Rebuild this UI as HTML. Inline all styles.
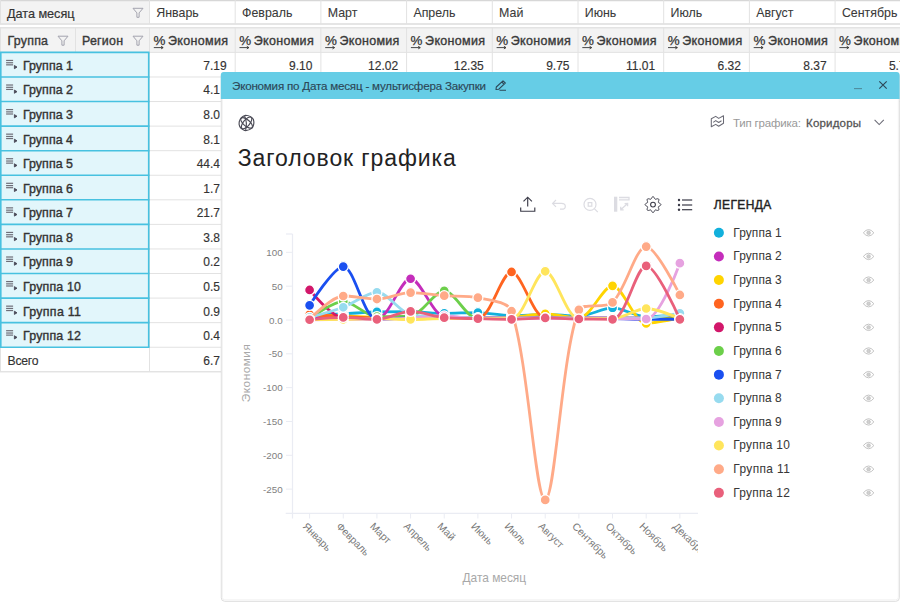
<!DOCTYPE html>
<html><head><meta charset="utf-8"><style>
html,body{margin:0;padding:0;width:900px;height:602px;overflow:hidden;background:#fff;font-family:"Liberation Sans", sans-serif;}
</style></head><body>
<svg width="900" height="602" viewBox="0 0 900 602" style="position:absolute;left:0;top:0" font-family='"Liberation Sans", sans-serif'><rect width="900" height="602" fill="#fff"/><defs><clipPath id="tc"><path d="M0 0 H900 V72 H220 V602 H0 Z"/></clipPath></defs><g id="table"><rect x="0" y="0" width="149.5" height="24" fill="#f3f3f3"/><line x1="0" y1="0.6" x2="900" y2="0.6" stroke="#d7d7d7" stroke-width="1.2"/><line x1="0" y1="24" x2="900" y2="24" stroke="#e5e5e5" stroke-width="1.8"/><rect x="0" y="27" width="900" height="25" fill="#f3f3f3"/><line x1="0" y1="27.8" x2="900" y2="27.8" stroke="#e3e3e3" stroke-width="1.6"/><line x1="0.5" y1="0" x2="0.5" y2="24" stroke="#e2e2e2"/><line x1="0.5" y1="27" x2="0.5" y2="372" stroke="#e2e2e2"/><line x1="149.50" y1="0" x2="149.50" y2="24" stroke="#e2e2e2"/><line x1="149.50" y1="27" x2="149.50" y2="372" stroke="#e2e2e2"/><line x1="235.20" y1="0" x2="235.20" y2="24" stroke="#e2e2e2"/><line x1="235.20" y1="27" x2="235.20" y2="372" stroke="#e2e2e2"/><line x1="320.90" y1="0" x2="320.90" y2="24" stroke="#e2e2e2"/><line x1="320.90" y1="27" x2="320.90" y2="372" stroke="#e2e2e2"/><line x1="406.60" y1="0" x2="406.60" y2="24" stroke="#e2e2e2"/><line x1="406.60" y1="27" x2="406.60" y2="372" stroke="#e2e2e2"/><line x1="492.30" y1="0" x2="492.30" y2="24" stroke="#e2e2e2"/><line x1="492.30" y1="27" x2="492.30" y2="372" stroke="#e2e2e2"/><line x1="578.00" y1="0" x2="578.00" y2="24" stroke="#e2e2e2"/><line x1="578.00" y1="27" x2="578.00" y2="372" stroke="#e2e2e2"/><line x1="663.70" y1="0" x2="663.70" y2="24" stroke="#e2e2e2"/><line x1="663.70" y1="27" x2="663.70" y2="372" stroke="#e2e2e2"/><line x1="749.40" y1="0" x2="749.40" y2="24" stroke="#e2e2e2"/><line x1="749.40" y1="27" x2="749.40" y2="372" stroke="#e2e2e2"/><line x1="835.10" y1="0" x2="835.10" y2="24" stroke="#e2e2e2"/><line x1="835.10" y1="27" x2="835.10" y2="372" stroke="#e2e2e2"/><line x1="920.80" y1="0" x2="920.80" y2="24" stroke="#e2e2e2"/><line x1="920.80" y1="27" x2="920.80" y2="372" stroke="#e2e2e2"/><line x1="1006.50" y1="0" x2="1006.50" y2="24" stroke="#e2e2e2"/><line x1="1006.50" y1="27" x2="1006.50" y2="372" stroke="#e2e2e2"/><line x1="75.5" y1="27" x2="75.5" y2="52" stroke="#e2e2e2"/><line x1="0" y1="52.40" x2="900" y2="52.40" stroke="#e2e2e2"/><line x1="0" y1="76.97" x2="900" y2="76.97" stroke="#e2e2e2"/><line x1="0" y1="101.54" x2="900" y2="101.54" stroke="#e2e2e2"/><line x1="0" y1="126.11" x2="900" y2="126.11" stroke="#e2e2e2"/><line x1="0" y1="150.68" x2="900" y2="150.68" stroke="#e2e2e2"/><line x1="0" y1="175.25" x2="900" y2="175.25" stroke="#e2e2e2"/><line x1="0" y1="199.82" x2="900" y2="199.82" stroke="#e2e2e2"/><line x1="0" y1="224.39" x2="900" y2="224.39" stroke="#e2e2e2"/><line x1="0" y1="248.96" x2="900" y2="248.96" stroke="#e2e2e2"/><line x1="0" y1="273.53" x2="900" y2="273.53" stroke="#e2e2e2"/><line x1="0" y1="298.10" x2="900" y2="298.10" stroke="#e2e2e2"/><line x1="0" y1="322.67" x2="900" y2="322.67" stroke="#e2e2e2"/><line x1="0" y1="347.24" x2="900" y2="347.24" stroke="#e2e2e2"/><line x1="0" y1="371.81" x2="900" y2="371.81" stroke="#e2e2e2"/><rect x="0" y="52.4" width="149" height="294.84" fill="#e2f6fb"/><line x1="0" y1="52.40" x2="149.5" y2="52.40" stroke="#47c1e0" stroke-width="1.6"/><line x1="0" y1="76.97" x2="149.5" y2="76.97" stroke="#47c1e0" stroke-width="1.6"/><line x1="0" y1="101.54" x2="149.5" y2="101.54" stroke="#47c1e0" stroke-width="1.6"/><line x1="0" y1="126.11" x2="149.5" y2="126.11" stroke="#47c1e0" stroke-width="1.6"/><line x1="0" y1="150.68" x2="149.5" y2="150.68" stroke="#47c1e0" stroke-width="1.6"/><line x1="0" y1="175.25" x2="149.5" y2="175.25" stroke="#47c1e0" stroke-width="1.6"/><line x1="0" y1="199.82" x2="149.5" y2="199.82" stroke="#47c1e0" stroke-width="1.6"/><line x1="0" y1="224.39" x2="149.5" y2="224.39" stroke="#47c1e0" stroke-width="1.6"/><line x1="0" y1="248.96" x2="149.5" y2="248.96" stroke="#47c1e0" stroke-width="1.6"/><line x1="0" y1="273.53" x2="149.5" y2="273.53" stroke="#47c1e0" stroke-width="1.6"/><line x1="0" y1="298.10" x2="149.5" y2="298.10" stroke="#47c1e0" stroke-width="1.6"/><line x1="0" y1="322.67" x2="149.5" y2="322.67" stroke="#47c1e0" stroke-width="1.6"/><line x1="0" y1="347.24" x2="149.5" y2="347.24" stroke="#47c1e0" stroke-width="1.6"/><line x1="0.8" y1="52.4" x2="0.8" y2="347.24" stroke="#47c1e0" stroke-width="1.6"/><line x1="148.7" y1="52.4" x2="148.7" y2="347.24" stroke="#47c1e0" stroke-width="1.6"/><path d="M133 8.3 L143 8.3 L139.1 12.9 L139.1 17.3 L136.9 17.3 L136.9 12.9 Z" fill="none" stroke="#a3a3ae" stroke-width="1" stroke-linejoin="round"/><path d="M58 36.2 L68 36.2 L64.1 40.800000000000004 L64.1 45.2 L61.9 45.2 L61.9 40.800000000000004 Z" fill="none" stroke="#a3a3ae" stroke-width="1" stroke-linejoin="round"/><path d="M133 36.2 L143 36.2 L139.1 40.800000000000004 L139.1 45.2 L136.9 45.2 L136.9 40.800000000000004 Z" fill="none" stroke="#a3a3ae" stroke-width="1" stroke-linejoin="round"/><path d="M153.80 47.6 H163.00 M161.10 46.3 L163.20 47.6 L161.10 48.9" fill="none" stroke="#333" stroke-width="0.9"/><path d="M239.50 47.6 H248.70 M246.80 46.3 L248.90 47.6 L246.80 48.9" fill="none" stroke="#333" stroke-width="0.9"/><path d="M325.20 47.6 H334.40 M332.50 46.3 L334.60 47.6 L332.50 48.9" fill="none" stroke="#333" stroke-width="0.9"/><path d="M410.90 47.6 H420.10 M418.20 46.3 L420.30 47.6 L418.20 48.9" fill="none" stroke="#333" stroke-width="0.9"/><path d="M496.60 47.6 H505.80 M503.90 46.3 L506.00 47.6 L503.90 48.9" fill="none" stroke="#333" stroke-width="0.9"/><path d="M582.30 47.6 H591.50 M589.60 46.3 L591.70 47.6 L589.60 48.9" fill="none" stroke="#333" stroke-width="0.9"/><path d="M668.00 47.6 H677.20 M675.30 46.3 L677.40 47.6 L675.30 48.9" fill="none" stroke="#333" stroke-width="0.9"/><path d="M753.70 47.6 H762.90 M761.00 46.3 L763.10 47.6 L761.00 48.9" fill="none" stroke="#333" stroke-width="0.9"/><path d="M839.40 47.6 H848.60 M846.70 46.3 L848.80 47.6 L846.70 48.9" fill="none" stroke="#333" stroke-width="0.9"/><path d="M925.10 47.6 H934.30 M932.40 46.3 L934.50 47.6 L932.40 48.9" fill="none" stroke="#333" stroke-width="0.9"/><g fill="#6e6e78"><rect x="6.1" y="59.85" width="7" height="1.2"/><rect x="6.1" y="62.15" width="7" height="1.2"/><rect x="6.1" y="64.25" width="7" height="1.2"/><path d="M14.4 65.50 L17 67.10 L14.4 68.70 Z" fill="#4a4a58" stroke="#4a4a58" stroke-width="0.9" stroke-linejoin="round"/></g><g fill="#6e6e78"><rect x="6.1" y="84.42" width="7" height="1.2"/><rect x="6.1" y="86.72" width="7" height="1.2"/><rect x="6.1" y="88.82" width="7" height="1.2"/><path d="M14.4 90.07 L17 91.67 L14.4 93.27 Z" fill="#4a4a58" stroke="#4a4a58" stroke-width="0.9" stroke-linejoin="round"/></g><g fill="#6e6e78"><rect x="6.1" y="108.99" width="7" height="1.2"/><rect x="6.1" y="111.29" width="7" height="1.2"/><rect x="6.1" y="113.39" width="7" height="1.2"/><path d="M14.4 114.64 L17 116.24 L14.4 117.84 Z" fill="#4a4a58" stroke="#4a4a58" stroke-width="0.9" stroke-linejoin="round"/></g><g fill="#6e6e78"><rect x="6.1" y="133.56" width="7" height="1.2"/><rect x="6.1" y="135.86" width="7" height="1.2"/><rect x="6.1" y="137.96" width="7" height="1.2"/><path d="M14.4 139.21 L17 140.81 L14.4 142.41 Z" fill="#4a4a58" stroke="#4a4a58" stroke-width="0.9" stroke-linejoin="round"/></g><g fill="#6e6e78"><rect x="6.1" y="158.13" width="7" height="1.2"/><rect x="6.1" y="160.43" width="7" height="1.2"/><rect x="6.1" y="162.53" width="7" height="1.2"/><path d="M14.4 163.78 L17 165.38 L14.4 166.98 Z" fill="#4a4a58" stroke="#4a4a58" stroke-width="0.9" stroke-linejoin="round"/></g><g fill="#6e6e78"><rect x="6.1" y="182.70" width="7" height="1.2"/><rect x="6.1" y="185.00" width="7" height="1.2"/><rect x="6.1" y="187.10" width="7" height="1.2"/><path d="M14.4 188.35 L17 189.95 L14.4 191.55 Z" fill="#4a4a58" stroke="#4a4a58" stroke-width="0.9" stroke-linejoin="round"/></g><g fill="#6e6e78"><rect x="6.1" y="207.27" width="7" height="1.2"/><rect x="6.1" y="209.57" width="7" height="1.2"/><rect x="6.1" y="211.67" width="7" height="1.2"/><path d="M14.4 212.92 L17 214.52 L14.4 216.12 Z" fill="#4a4a58" stroke="#4a4a58" stroke-width="0.9" stroke-linejoin="round"/></g><g fill="#6e6e78"><rect x="6.1" y="231.84" width="7" height="1.2"/><rect x="6.1" y="234.14" width="7" height="1.2"/><rect x="6.1" y="236.24" width="7" height="1.2"/><path d="M14.4 237.49 L17 239.09 L14.4 240.69 Z" fill="#4a4a58" stroke="#4a4a58" stroke-width="0.9" stroke-linejoin="round"/></g><g fill="#6e6e78"><rect x="6.1" y="256.41" width="7" height="1.2"/><rect x="6.1" y="258.71" width="7" height="1.2"/><rect x="6.1" y="260.81" width="7" height="1.2"/><path d="M14.4 262.06 L17 263.66 L14.4 265.26 Z" fill="#4a4a58" stroke="#4a4a58" stroke-width="0.9" stroke-linejoin="round"/></g><g fill="#6e6e78"><rect x="6.1" y="280.98" width="7" height="1.2"/><rect x="6.1" y="283.28" width="7" height="1.2"/><rect x="6.1" y="285.38" width="7" height="1.2"/><path d="M14.4 286.63 L17 288.23 L14.4 289.83 Z" fill="#4a4a58" stroke="#4a4a58" stroke-width="0.9" stroke-linejoin="round"/></g><g fill="#6e6e78"><rect x="6.1" y="305.55" width="7" height="1.2"/><rect x="6.1" y="307.85" width="7" height="1.2"/><rect x="6.1" y="309.95" width="7" height="1.2"/><path d="M14.4 311.20 L17 312.80 L14.4 314.40 Z" fill="#4a4a58" stroke="#4a4a58" stroke-width="0.9" stroke-linejoin="round"/></g><g fill="#6e6e78"><rect x="6.1" y="330.12" width="7" height="1.2"/><rect x="6.1" y="332.42" width="7" height="1.2"/><rect x="6.1" y="334.52" width="7" height="1.2"/><path d="M14.4 335.77 L17 337.37 L14.4 338.97 Z" fill="#4a4a58" stroke="#4a4a58" stroke-width="0.9" stroke-linejoin="round"/></g><line x1="0" y1="371.7" x2="900" y2="371.7" stroke="#e2e2e2"/><g clip-path="url(#tc)"><text x="7" y="17.5" font-size="12.7" font-weight="400" fill="#333333" text-anchor="start" stroke="#333333" stroke-width="0.18" textLength="67.5" lengthAdjust="spacing" >Дата месяц</text><text x="156.3" y="17.4" font-size="12.4" font-weight="400" fill="#3a3a3a" text-anchor="start" stroke="#3a3a3a" stroke-width="0.08" >Январь</text><text x="242.0" y="17.4" font-size="12.4" font-weight="400" fill="#3a3a3a" text-anchor="start" stroke="#3a3a3a" stroke-width="0.08" >Февраль</text><text x="327.7" y="17.4" font-size="12.4" font-weight="400" fill="#3a3a3a" text-anchor="start" stroke="#3a3a3a" stroke-width="0.08" >Март</text><text x="413.40000000000003" y="17.4" font-size="12.4" font-weight="400" fill="#3a3a3a" text-anchor="start" stroke="#3a3a3a" stroke-width="0.08" >Апрель</text><text x="499.1" y="17.4" font-size="12.4" font-weight="400" fill="#3a3a3a" text-anchor="start" stroke="#3a3a3a" stroke-width="0.08" >Май</text><text x="584.8" y="17.4" font-size="12.4" font-weight="400" fill="#3a3a3a" text-anchor="start" stroke="#3a3a3a" stroke-width="0.08" >Июнь</text><text x="670.5" y="17.4" font-size="12.4" font-weight="400" fill="#3a3a3a" text-anchor="start" stroke="#3a3a3a" stroke-width="0.08" >Июль</text><text x="756.1999999999999" y="17.4" font-size="12.4" font-weight="400" fill="#3a3a3a" text-anchor="start" stroke="#3a3a3a" stroke-width="0.08" >Август</text><text x="841.9" y="17.4" font-size="12.4" font-weight="400" fill="#3a3a3a" text-anchor="start" stroke="#3a3a3a" stroke-width="0.08" >Сентябрь</text><text x="927.6" y="17.4" font-size="12.4" font-weight="400" fill="#3a3a3a" text-anchor="start" stroke="#3a3a3a" stroke-width="0.08" >Октябрь</text><text x="7.5" y="44.8" font-size="12.4" font-weight="400" fill="#3a3a3a" text-anchor="start" stroke="#3a3a3a" stroke-width="0.38" textLength="40.5" lengthAdjust="spacing" >Группа</text><text x="82" y="44.8" font-size="12.4" font-weight="400" fill="#3a3a3a" text-anchor="start" stroke="#3a3a3a" stroke-width="0.38" textLength="41" lengthAdjust="spacing" >Регион</text><text x="153.5" y="45.0" font-size="13.4" font-weight="400" fill="#333333" text-anchor="start" stroke="#333333" stroke-width="0.25" >%</text><text x="168.0" y="44.8" font-size="12.5" font-weight="400" fill="#3a3a3a" text-anchor="start" stroke="#3a3a3a" stroke-width="0.38" textLength="60" lengthAdjust="spacing" >Экономия</text><text x="239.2" y="45.0" font-size="13.4" font-weight="400" fill="#333333" text-anchor="start" stroke="#333333" stroke-width="0.25" >%</text><text x="253.7" y="44.8" font-size="12.5" font-weight="400" fill="#3a3a3a" text-anchor="start" stroke="#3a3a3a" stroke-width="0.38" textLength="60" lengthAdjust="spacing" >Экономия</text><text x="324.9" y="45.0" font-size="13.4" font-weight="400" fill="#333333" text-anchor="start" stroke="#333333" stroke-width="0.25" >%</text><text x="339.4" y="44.8" font-size="12.5" font-weight="400" fill="#3a3a3a" text-anchor="start" stroke="#3a3a3a" stroke-width="0.38" textLength="60" lengthAdjust="spacing" >Экономия</text><text x="410.6" y="45.0" font-size="13.4" font-weight="400" fill="#333333" text-anchor="start" stroke="#333333" stroke-width="0.25" >%</text><text x="425.1" y="44.8" font-size="12.5" font-weight="400" fill="#3a3a3a" text-anchor="start" stroke="#3a3a3a" stroke-width="0.38" textLength="60" lengthAdjust="spacing" >Экономия</text><text x="496.3" y="45.0" font-size="13.4" font-weight="400" fill="#333333" text-anchor="start" stroke="#333333" stroke-width="0.25" >%</text><text x="510.8" y="44.8" font-size="12.5" font-weight="400" fill="#3a3a3a" text-anchor="start" stroke="#3a3a3a" stroke-width="0.38" textLength="60" lengthAdjust="spacing" >Экономия</text><text x="582.0" y="45.0" font-size="13.4" font-weight="400" fill="#333333" text-anchor="start" stroke="#333333" stroke-width="0.25" >%</text><text x="596.5" y="44.8" font-size="12.5" font-weight="400" fill="#3a3a3a" text-anchor="start" stroke="#3a3a3a" stroke-width="0.38" textLength="60" lengthAdjust="spacing" >Экономия</text><text x="667.7" y="45.0" font-size="13.4" font-weight="400" fill="#333333" text-anchor="start" stroke="#333333" stroke-width="0.25" >%</text><text x="682.2" y="44.8" font-size="12.5" font-weight="400" fill="#3a3a3a" text-anchor="start" stroke="#3a3a3a" stroke-width="0.38" textLength="60" lengthAdjust="spacing" >Экономия</text><text x="753.4" y="45.0" font-size="13.4" font-weight="400" fill="#333333" text-anchor="start" stroke="#333333" stroke-width="0.25" >%</text><text x="767.9" y="44.8" font-size="12.5" font-weight="400" fill="#3a3a3a" text-anchor="start" stroke="#3a3a3a" stroke-width="0.38" textLength="60" lengthAdjust="spacing" >Экономия</text><text x="839.1" y="45.0" font-size="13.4" font-weight="400" fill="#333333" text-anchor="start" stroke="#333333" stroke-width="0.25" >%</text><text x="853.6" y="44.8" font-size="12.5" font-weight="400" fill="#3a3a3a" text-anchor="start" stroke="#3a3a3a" stroke-width="0.38" textLength="60" lengthAdjust="spacing" >Экономия</text><text x="924.8000000000001" y="45.0" font-size="13.4" font-weight="400" fill="#333333" text-anchor="start" stroke="#333333" stroke-width="0.25" >%</text><text x="939.3000000000001" y="44.8" font-size="12.5" font-weight="400" fill="#3a3a3a" text-anchor="start" stroke="#3a3a3a" stroke-width="0.38" textLength="60" lengthAdjust="spacing" >Экономия</text><text x="23" y="69.9" font-size="12.4" font-weight="400" fill="#333333" text-anchor="start" stroke="#333333" stroke-width="0.38" textLength="50" lengthAdjust="spacing" >Группа 1</text><text x="226.7" y="69.9" font-size="12.0" font-weight="400" fill="#333333" text-anchor="end" stroke="#333333" stroke-width="0.15" >7.19</text><text x="312.4" y="69.9" font-size="12.0" font-weight="400" fill="#333333" text-anchor="end" stroke="#333333" stroke-width="0.15" >9.10</text><text x="398.1" y="69.9" font-size="12.0" font-weight="400" fill="#333333" text-anchor="end" stroke="#333333" stroke-width="0.15" >12.02</text><text x="483.8" y="69.9" font-size="12.0" font-weight="400" fill="#333333" text-anchor="end" stroke="#333333" stroke-width="0.15" >12.35</text><text x="569.5" y="69.9" font-size="12.0" font-weight="400" fill="#333333" text-anchor="end" stroke="#333333" stroke-width="0.15" >9.75</text><text x="655.2" y="69.9" font-size="12.0" font-weight="400" fill="#333333" text-anchor="end" stroke="#333333" stroke-width="0.15" >11.01</text><text x="740.9" y="69.9" font-size="12.0" font-weight="400" fill="#333333" text-anchor="end" stroke="#333333" stroke-width="0.15" >6.32</text><text x="826.6" y="69.9" font-size="12.0" font-weight="400" fill="#333333" text-anchor="end" stroke="#333333" stroke-width="0.15" >8.37</text><text x="912.3000000000001" y="69.9" font-size="12.0" font-weight="400" fill="#333333" text-anchor="end" stroke="#333333" stroke-width="0.15" >5.75</text><text x="998.0" y="69.9" font-size="12.0" font-weight="400" fill="#333333" text-anchor="end" stroke="#333333" stroke-width="0.15" >6.10</text><text x="23" y="94.47" font-size="12.4" font-weight="400" fill="#333333" text-anchor="start" stroke="#333333" stroke-width="0.38" textLength="50" lengthAdjust="spacing" >Группа 2</text><text x="226.7" y="94.47" font-size="12.0" font-weight="400" fill="#333333" text-anchor="end" stroke="#333333" stroke-width="0.15" >4.15</text><text x="23" y="119.04" font-size="12.4" font-weight="400" fill="#333333" text-anchor="start" stroke="#333333" stroke-width="0.38" textLength="50" lengthAdjust="spacing" >Группа 3</text><text x="226.7" y="119.04" font-size="12.0" font-weight="400" fill="#333333" text-anchor="end" stroke="#333333" stroke-width="0.15" >8.06</text><text x="23" y="143.61" font-size="12.4" font-weight="400" fill="#333333" text-anchor="start" stroke="#333333" stroke-width="0.38" textLength="50" lengthAdjust="spacing" >Группа 4</text><text x="226.7" y="143.61" font-size="12.0" font-weight="400" fill="#333333" text-anchor="end" stroke="#333333" stroke-width="0.15" >8.12</text><text x="23" y="168.18" font-size="12.4" font-weight="400" fill="#333333" text-anchor="start" stroke="#333333" stroke-width="0.38" textLength="50" lengthAdjust="spacing" >Группа 5</text><text x="226.7" y="168.18" font-size="12.0" font-weight="400" fill="#333333" text-anchor="end" stroke="#333333" stroke-width="0.15" >44.43</text><text x="23" y="192.75" font-size="12.4" font-weight="400" fill="#333333" text-anchor="start" stroke="#333333" stroke-width="0.38" textLength="50" lengthAdjust="spacing" >Группа 6</text><text x="226.7" y="192.75" font-size="12.0" font-weight="400" fill="#333333" text-anchor="end" stroke="#333333" stroke-width="0.15" >1.74</text><text x="23" y="217.32000000000002" font-size="12.4" font-weight="400" fill="#333333" text-anchor="start" stroke="#333333" stroke-width="0.38" textLength="50" lengthAdjust="spacing" >Группа 7</text><text x="226.7" y="217.32000000000002" font-size="12.0" font-weight="400" fill="#333333" text-anchor="end" stroke="#333333" stroke-width="0.15" >21.74</text><text x="23" y="241.89000000000001" font-size="12.4" font-weight="400" fill="#333333" text-anchor="start" stroke="#333333" stroke-width="0.38" textLength="50" lengthAdjust="spacing" >Группа 8</text><text x="226.7" y="241.89000000000001" font-size="12.0" font-weight="400" fill="#333333" text-anchor="end" stroke="#333333" stroke-width="0.15" >3.83</text><text x="23" y="266.46000000000004" font-size="12.4" font-weight="400" fill="#333333" text-anchor="start" stroke="#333333" stroke-width="0.38" textLength="50" lengthAdjust="spacing" >Группа 9</text><text x="226.7" y="266.46000000000004" font-size="12.0" font-weight="400" fill="#333333" text-anchor="end" stroke="#333333" stroke-width="0.15" >0.25</text><text x="23" y="291.03" font-size="12.4" font-weight="400" fill="#333333" text-anchor="start" stroke="#333333" stroke-width="0.38" textLength="58" lengthAdjust="spacing" >Группа 10</text><text x="226.7" y="291.03" font-size="12.0" font-weight="400" fill="#333333" text-anchor="end" stroke="#333333" stroke-width="0.15" >0.53</text><text x="23" y="315.6" font-size="12.4" font-weight="400" fill="#333333" text-anchor="start" stroke="#333333" stroke-width="0.38" textLength="58" lengthAdjust="spacing" >Группа 11</text><text x="226.7" y="315.6" font-size="12.0" font-weight="400" fill="#333333" text-anchor="end" stroke="#333333" stroke-width="0.15" >0.93</text><text x="23" y="340.16999999999996" font-size="12.4" font-weight="400" fill="#333333" text-anchor="start" stroke="#333333" stroke-width="0.38" textLength="58" lengthAdjust="spacing" >Группа 12</text><text x="226.7" y="340.16999999999996" font-size="12.0" font-weight="400" fill="#333333" text-anchor="end" stroke="#333333" stroke-width="0.15" >0.41</text><text x="7.5" y="364.84000000000003" font-size="12.2" font-weight="400" fill="#333333" text-anchor="start" stroke="#333333" stroke-width="0.15" textLength="31" lengthAdjust="spacing" >Всего</text><text x="226.7" y="364.84000000000003" font-size="12.0" font-weight="400" fill="#333333" text-anchor="end" stroke="#333333" stroke-width="0.15" >6.72</text></g></g><rect x="221.3" y="72.5" width="678.0" height="528.8" rx="3.5" fill="#fff" stroke="#dcdcdc" stroke-width="1"/><rect x="222.3" y="73.5" width="676.0" height="526.3" rx="2.5" fill="none" stroke="#f2f2f2" stroke-width="1"/><path d="M220.8 75 Q220.8 72 223.8 72 H896.5 Q899.6 72 899.6 75 V99 H220.8 Z" fill="#66cde6"/><text x="232" y="89.5" font-size="11.6" fill="#2d4757" stroke="#2d4757" stroke-width="0.15" textLength="254" lengthAdjust="spacing">Экономия по Дата месяц - мультисфера Закупки</text><path d="M496 89.5 L496.3 87 L503 80.8 L505.3 83 L498.6 89.3 Z M501.8 82 L504 84.2 M499.5 90.2 H506" fill="none" stroke="#2d4757" stroke-width="1.1" stroke-linejoin="round"/><line x1="854" y1="88.6" x2="862" y2="88.6" stroke="#4f8c9e" stroke-width="1.1"/><path d="M879.3 81.3 L886.7 88.7 M886.7 81.3 L879.3 88.7" stroke="#2d4757" stroke-width="1.15"/></svg><svg width='900' height='602' style='position:absolute;left:0;top:0' font-family='"Liberation Sans", sans-serif'><line x1="292.5" y1="234" x2="292.5" y2="518.5" stroke="#eaecf3" stroke-width="1.2"/><line x1="286" y1="234" x2="292.5" y2="234" stroke="#eaecf3" stroke-width="1.2"/><line x1="286" y1="252.35" x2="292.5" y2="252.35" stroke="#eaecf3" stroke-width="1"/><text x="282.7" y="255.85" font-size="9.8" fill="#808080" text-anchor="end">100</text><line x1="286" y1="286.18" x2="292.5" y2="286.18" stroke="#eaecf3" stroke-width="1"/><text x="282.7" y="289.68" font-size="9.8" fill="#808080" text-anchor="end">50</text><line x1="286" y1="320.00" x2="292.5" y2="320.00" stroke="#eaecf3" stroke-width="1"/><text x="282.7" y="323.50" font-size="9.8" fill="#808080" text-anchor="end">0.0</text><line x1="286" y1="353.82" x2="292.5" y2="353.82" stroke="#eaecf3" stroke-width="1"/><text x="282.7" y="357.32" font-size="9.8" fill="#808080" text-anchor="end">-50</text><line x1="286" y1="387.65" x2="292.5" y2="387.65" stroke="#eaecf3" stroke-width="1"/><text x="282.7" y="391.15" font-size="9.8" fill="#808080" text-anchor="end">-100</text><line x1="286" y1="421.48" x2="292.5" y2="421.48" stroke="#eaecf3" stroke-width="1"/><text x="282.7" y="424.98" font-size="9.8" fill="#808080" text-anchor="end">-150</text><line x1="286" y1="455.30" x2="292.5" y2="455.30" stroke="#eaecf3" stroke-width="1"/><text x="282.7" y="458.80" font-size="9.8" fill="#808080" text-anchor="end">-200</text><line x1="286" y1="489.12" x2="292.5" y2="489.12" stroke="#eaecf3" stroke-width="1"/><text x="282.7" y="492.62" font-size="9.8" fill="#808080" text-anchor="end">-250</text><text x="0" y="0" font-size="11.8" fill="#a8a8a8" text-anchor="middle" textLength="58" lengthAdjust="spacing" transform="translate(250.4 373.2) rotate(-90)">Экономия</text><line x1="285.7" y1="513.3" x2="698" y2="513.3" stroke="#eaecf3" stroke-width="1.2"/><line x1="309.60" y1="513.3" x2="309.60" y2="518.5" stroke="#eaecf3" stroke-width="1"/><line x1="343.26" y1="513.3" x2="343.26" y2="518.5" stroke="#eaecf3" stroke-width="1"/><line x1="376.92" y1="513.3" x2="376.92" y2="518.5" stroke="#eaecf3" stroke-width="1"/><line x1="410.58" y1="513.3" x2="410.58" y2="518.5" stroke="#eaecf3" stroke-width="1"/><line x1="444.24" y1="513.3" x2="444.24" y2="518.5" stroke="#eaecf3" stroke-width="1"/><line x1="477.90" y1="513.3" x2="477.90" y2="518.5" stroke="#eaecf3" stroke-width="1"/><line x1="511.56" y1="513.3" x2="511.56" y2="518.5" stroke="#eaecf3" stroke-width="1"/><line x1="545.22" y1="513.3" x2="545.22" y2="518.5" stroke="#eaecf3" stroke-width="1"/><line x1="578.88" y1="513.3" x2="578.88" y2="518.5" stroke="#eaecf3" stroke-width="1"/><line x1="612.54" y1="513.3" x2="612.54" y2="518.5" stroke="#eaecf3" stroke-width="1"/><line x1="646.20" y1="513.3" x2="646.20" y2="518.5" stroke="#eaecf3" stroke-width="1"/><line x1="679.86" y1="513.3" x2="679.86" y2="518.5" stroke="#eaecf3" stroke-width="1"/><defs><clipPath id="cl"><rect x="230" y="100" width="468" height="490"/></clipPath></defs><g clip-path="url(#cl)"><text x="0" y="0" font-size="10.3" fill="#7a7a7a" transform="translate(304.60 524.5) rotate(45)" dominant-baseline="central">Январь</text><text x="0" y="0" font-size="10.3" fill="#7a7a7a" transform="translate(338.26 524.5) rotate(45)" dominant-baseline="central">Февраль</text><text x="0" y="0" font-size="10.3" fill="#7a7a7a" transform="translate(371.92 524.5) rotate(45)" dominant-baseline="central">Март</text><text x="0" y="0" font-size="10.3" fill="#7a7a7a" transform="translate(405.58 524.5) rotate(45)" dominant-baseline="central">Апрель</text><text x="0" y="0" font-size="10.3" fill="#7a7a7a" transform="translate(439.24 524.5) rotate(45)" dominant-baseline="central">Май</text><text x="0" y="0" font-size="10.3" fill="#7a7a7a" transform="translate(472.90 524.5) rotate(45)" dominant-baseline="central">Июнь</text><text x="0" y="0" font-size="10.3" fill="#7a7a7a" transform="translate(506.56 524.5) rotate(45)" dominant-baseline="central">Июль</text><text x="0" y="0" font-size="10.3" fill="#7a7a7a" transform="translate(540.22 524.5) rotate(45)" dominant-baseline="central">Август</text><text x="0" y="0" font-size="10.3" fill="#7a7a7a" transform="translate(573.88 524.5) rotate(45)" dominant-baseline="central">Сентябрь</text><text x="0" y="0" font-size="10.3" fill="#7a7a7a" transform="translate(607.54 524.5) rotate(45)" dominant-baseline="central">Октябрь</text><text x="0" y="0" font-size="10.3" fill="#7a7a7a" transform="translate(641.20 524.5) rotate(45)" dominant-baseline="central">Ноябрь</text><text x="0" y="0" font-size="10.3" fill="#7a7a7a" transform="translate(674.86 524.5) rotate(45)" dominant-baseline="central">Декабрь</text></g><text x="462.5" y="582" font-size="11.9" fill="#a8a8a8">Дата месяц</text><g><path d="M309.60 315.14 C309.60 315.14 333.17 314.33 343.26 313.84 C353.36 313.35 366.81 312.09 376.92 311.87 C387.01 311.65 400.49 311.65 410.58 311.65 C420.68 311.65 434.14 313.40 444.24 313.40 C454.33 313.40 467.82 312.55 477.90 312.55 C488.02 312.55 501.44 315.72 511.56 315.72 C521.64 315.72 535.12 314.34 545.22 314.34 C555.32 314.34 568.92 316.14 578.88 316.14 C589.12 316.14 602.46 307.82 612.54 307.82 C622.65 307.82 635.94 316.62 646.20 316.62 C656.14 316.62 679.86 314.59 679.86 314.59" fill="none" stroke="#12b0dc" stroke-width="2.8" stroke-linejoin="round" stroke-linecap="round"/><circle cx="309.60" cy="315.14" r="5.0" fill="#12b0dc" stroke="#fff" stroke-width="1.3"/><circle cx="343.26" cy="313.84" r="5.0" fill="#12b0dc" stroke="#fff" stroke-width="1.3"/><circle cx="376.92" cy="311.87" r="5.0" fill="#12b0dc" stroke="#fff" stroke-width="1.3"/><circle cx="410.58" cy="311.65" r="5.0" fill="#12b0dc" stroke="#fff" stroke-width="1.3"/><circle cx="444.24" cy="313.40" r="5.0" fill="#12b0dc" stroke="#fff" stroke-width="1.3"/><circle cx="477.90" cy="312.55" r="5.0" fill="#12b0dc" stroke="#fff" stroke-width="1.3"/><circle cx="511.56" cy="315.72" r="5.0" fill="#12b0dc" stroke="#fff" stroke-width="1.3"/><circle cx="545.22" cy="314.34" r="5.0" fill="#12b0dc" stroke="#fff" stroke-width="1.3"/><circle cx="578.88" cy="316.14" r="5.0" fill="#12b0dc" stroke="#fff" stroke-width="1.3"/><circle cx="612.54" cy="307.82" r="5.0" fill="#12b0dc" stroke="#fff" stroke-width="1.3"/><circle cx="646.20" cy="316.62" r="5.0" fill="#12b0dc" stroke="#fff" stroke-width="1.3"/><circle cx="679.86" cy="314.59" r="5.0" fill="#12b0dc" stroke="#fff" stroke-width="1.3"/></g><g><path d="M309.60 317.23 C309.60 317.23 333.16 317.76 343.26 317.97 C353.36 318.18 369.00 318.65 376.92 318.65 C389.20 318.65 400.33 278.73 410.58 278.73 C420.53 278.73 432.11 314.58 444.24 316.62 C452.30 317.97 467.80 317.97 477.90 317.97 C487.99 317.97 501.46 317.97 511.56 317.97 C521.66 317.97 535.12 317.29 545.22 317.29 C555.32 317.29 568.78 317.97 578.88 317.97 C588.98 317.97 602.44 317.97 612.54 317.97 C622.64 317.97 636.10 318.65 646.20 318.65 C656.30 318.65 679.86 318.65 679.86 318.65" fill="none" stroke="#c42dbb" stroke-width="2.8" stroke-linejoin="round" stroke-linecap="round"/><circle cx="309.60" cy="317.23" r="5.0" fill="#c42dbb" stroke="#fff" stroke-width="1.3"/><circle cx="343.26" cy="317.97" r="5.0" fill="#c42dbb" stroke="#fff" stroke-width="1.3"/><circle cx="376.92" cy="318.65" r="5.0" fill="#c42dbb" stroke="#fff" stroke-width="1.3"/><circle cx="410.58" cy="278.73" r="5.0" fill="#c42dbb" stroke="#fff" stroke-width="1.3"/><circle cx="444.24" cy="316.62" r="5.0" fill="#c42dbb" stroke="#fff" stroke-width="1.3"/><circle cx="477.90" cy="317.97" r="5.0" fill="#c42dbb" stroke="#fff" stroke-width="1.3"/><circle cx="511.56" cy="317.97" r="5.0" fill="#c42dbb" stroke="#fff" stroke-width="1.3"/><circle cx="545.22" cy="317.29" r="5.0" fill="#c42dbb" stroke="#fff" stroke-width="1.3"/><circle cx="578.88" cy="317.97" r="5.0" fill="#c42dbb" stroke="#fff" stroke-width="1.3"/><circle cx="612.54" cy="317.97" r="5.0" fill="#c42dbb" stroke="#fff" stroke-width="1.3"/><circle cx="646.20" cy="318.65" r="5.0" fill="#c42dbb" stroke="#fff" stroke-width="1.3"/><circle cx="679.86" cy="318.65" r="5.0" fill="#c42dbb" stroke="#fff" stroke-width="1.3"/></g><g><path d="M309.60 314.59 C309.60 314.59 333.16 315.54 343.26 315.94 C353.36 316.35 366.83 316.79 376.92 317.29 C387.02 317.80 400.48 319.32 410.58 319.32 C420.67 319.32 434.14 317.97 444.24 317.97 C454.33 317.97 467.81 318.65 477.90 318.65 C488.00 318.65 501.48 318.00 511.56 317.29 C521.68 316.58 535.13 313.91 545.22 313.91 C555.33 313.91 570.37 317.97 578.88 317.97 C590.56 317.97 602.85 285.84 612.54 285.84 C623.04 285.84 634.15 323.38 646.20 323.38 C654.35 323.38 679.86 317.97 679.86 317.97" fill="none" stroke="#ffd400" stroke-width="2.8" stroke-linejoin="round" stroke-linecap="round"/><circle cx="309.60" cy="314.59" r="5.0" fill="#ffd400" stroke="#fff" stroke-width="1.3"/><circle cx="343.26" cy="315.94" r="5.0" fill="#ffd400" stroke="#fff" stroke-width="1.3"/><circle cx="376.92" cy="317.29" r="5.0" fill="#ffd400" stroke="#fff" stroke-width="1.3"/><circle cx="410.58" cy="319.32" r="5.0" fill="#ffd400" stroke="#fff" stroke-width="1.3"/><circle cx="444.24" cy="317.97" r="5.0" fill="#ffd400" stroke="#fff" stroke-width="1.3"/><circle cx="477.90" cy="318.65" r="5.0" fill="#ffd400" stroke="#fff" stroke-width="1.3"/><circle cx="511.56" cy="317.29" r="5.0" fill="#ffd400" stroke="#fff" stroke-width="1.3"/><circle cx="545.22" cy="313.91" r="5.0" fill="#ffd400" stroke="#fff" stroke-width="1.3"/><circle cx="578.88" cy="317.97" r="5.0" fill="#ffd400" stroke="#fff" stroke-width="1.3"/><circle cx="612.54" cy="285.84" r="5.0" fill="#ffd400" stroke="#fff" stroke-width="1.3"/><circle cx="646.20" cy="323.38" r="5.0" fill="#ffd400" stroke="#fff" stroke-width="1.3"/><circle cx="679.86" cy="317.97" r="5.0" fill="#ffd400" stroke="#fff" stroke-width="1.3"/></g><g><path d="M309.60 314.52 C309.60 314.52 333.16 316.10 343.26 316.62 C353.35 317.13 366.82 317.67 376.92 317.97 C387.01 318.27 400.48 318.65 410.58 318.65 C420.68 318.65 434.14 318.65 444.24 318.65 C454.34 318.65 470.45 318.65 477.90 318.65 C490.64 318.65 501.41 271.97 511.56 271.97 C521.61 271.97 532.52 316.83 545.22 317.97 C552.72 318.65 568.78 318.65 578.88 318.65 C588.98 318.65 602.44 318.65 612.54 318.65 C622.64 318.65 636.10 318.65 646.20 318.65 C656.30 318.65 679.86 318.65 679.86 318.65" fill="none" stroke="#ff6420" stroke-width="2.8" stroke-linejoin="round" stroke-linecap="round"/><circle cx="309.60" cy="314.52" r="5.0" fill="#ff6420" stroke="#fff" stroke-width="1.3"/><circle cx="343.26" cy="316.62" r="5.0" fill="#ff6420" stroke="#fff" stroke-width="1.3"/><circle cx="376.92" cy="317.97" r="5.0" fill="#ff6420" stroke="#fff" stroke-width="1.3"/><circle cx="410.58" cy="318.65" r="5.0" fill="#ff6420" stroke="#fff" stroke-width="1.3"/><circle cx="444.24" cy="318.65" r="5.0" fill="#ff6420" stroke="#fff" stroke-width="1.3"/><circle cx="477.90" cy="318.65" r="5.0" fill="#ff6420" stroke="#fff" stroke-width="1.3"/><circle cx="511.56" cy="271.97" r="5.0" fill="#ff6420" stroke="#fff" stroke-width="1.3"/><circle cx="545.22" cy="317.97" r="5.0" fill="#ff6420" stroke="#fff" stroke-width="1.3"/><circle cx="578.88" cy="318.65" r="5.0" fill="#ff6420" stroke="#fff" stroke-width="1.3"/><circle cx="612.54" cy="318.65" r="5.0" fill="#ff6420" stroke="#fff" stroke-width="1.3"/><circle cx="646.20" cy="318.65" r="5.0" fill="#ff6420" stroke="#fff" stroke-width="1.3"/><circle cx="679.86" cy="318.65" r="5.0" fill="#ff6420" stroke="#fff" stroke-width="1.3"/></g><g><path d="M309.60 289.96 C309.60 289.96 331.84 317.09 343.26 317.97 C352.04 318.65 366.82 318.65 376.92 318.65 C387.02 318.65 400.48 317.97 410.58 317.97 C420.68 317.97 434.14 318.65 444.24 318.65 C454.34 318.65 467.80 317.97 477.90 317.97 C488.00 317.97 501.46 317.97 511.56 317.97 C521.66 317.97 535.12 317.97 545.22 317.97 C555.32 317.97 568.78 317.97 578.88 317.97 C588.98 317.97 602.44 317.97 612.54 317.97 C622.64 317.97 636.10 317.97 646.20 317.97 C656.30 317.97 679.86 317.97 679.86 317.97" fill="none" stroke="#d2176a" stroke-width="2.8" stroke-linejoin="round" stroke-linecap="round"/><circle cx="309.60" cy="289.96" r="5.0" fill="#d2176a" stroke="#fff" stroke-width="1.3"/><circle cx="343.26" cy="317.97" r="5.0" fill="#d2176a" stroke="#fff" stroke-width="1.3"/><circle cx="376.92" cy="318.65" r="5.0" fill="#d2176a" stroke="#fff" stroke-width="1.3"/><circle cx="410.58" cy="317.97" r="5.0" fill="#d2176a" stroke="#fff" stroke-width="1.3"/><circle cx="444.24" cy="318.65" r="5.0" fill="#d2176a" stroke="#fff" stroke-width="1.3"/><circle cx="477.90" cy="317.97" r="5.0" fill="#d2176a" stroke="#fff" stroke-width="1.3"/><circle cx="511.56" cy="317.97" r="5.0" fill="#d2176a" stroke="#fff" stroke-width="1.3"/><circle cx="545.22" cy="317.97" r="5.0" fill="#d2176a" stroke="#fff" stroke-width="1.3"/><circle cx="578.88" cy="317.97" r="5.0" fill="#d2176a" stroke="#fff" stroke-width="1.3"/><circle cx="612.54" cy="317.97" r="5.0" fill="#d2176a" stroke="#fff" stroke-width="1.3"/><circle cx="646.20" cy="317.97" r="5.0" fill="#d2176a" stroke="#fff" stroke-width="1.3"/><circle cx="679.86" cy="317.97" r="5.0" fill="#d2176a" stroke="#fff" stroke-width="1.3"/></g><g><path d="M309.60 318.85 C309.60 318.85 333.03 301.33 343.26 301.33 C353.23 301.33 366.35 316.62 376.92 316.62 C386.55 316.62 401.59 316.62 410.58 315.94 C421.78 315.10 434.34 290.91 444.24 290.91 C454.53 290.91 466.50 318.65 477.90 318.65 C486.70 318.65 501.46 318.65 511.56 318.65 C521.66 318.65 535.12 318.65 545.22 318.65 C555.32 318.65 568.78 318.65 578.88 318.65 C588.98 318.65 602.44 318.65 612.54 318.65 C622.64 318.65 636.10 318.65 646.20 318.65 C656.30 318.65 679.86 318.65 679.86 318.65" fill="none" stroke="#6ccf4a" stroke-width="2.8" stroke-linejoin="round" stroke-linecap="round"/><circle cx="309.60" cy="318.85" r="5.0" fill="#6ccf4a" stroke="#fff" stroke-width="1.3"/><circle cx="343.26" cy="301.33" r="5.0" fill="#6ccf4a" stroke="#fff" stroke-width="1.3"/><circle cx="376.92" cy="316.62" r="5.0" fill="#6ccf4a" stroke="#fff" stroke-width="1.3"/><circle cx="410.58" cy="315.94" r="5.0" fill="#6ccf4a" stroke="#fff" stroke-width="1.3"/><circle cx="444.24" cy="290.91" r="5.0" fill="#6ccf4a" stroke="#fff" stroke-width="1.3"/><circle cx="477.90" cy="318.65" r="5.0" fill="#6ccf4a" stroke="#fff" stroke-width="1.3"/><circle cx="511.56" cy="318.65" r="5.0" fill="#6ccf4a" stroke="#fff" stroke-width="1.3"/><circle cx="545.22" cy="318.65" r="5.0" fill="#6ccf4a" stroke="#fff" stroke-width="1.3"/><circle cx="578.88" cy="318.65" r="5.0" fill="#6ccf4a" stroke="#fff" stroke-width="1.3"/><circle cx="612.54" cy="318.65" r="5.0" fill="#6ccf4a" stroke="#fff" stroke-width="1.3"/><circle cx="646.20" cy="318.65" r="5.0" fill="#6ccf4a" stroke="#fff" stroke-width="1.3"/><circle cx="679.86" cy="318.65" r="5.0" fill="#6ccf4a" stroke="#fff" stroke-width="1.3"/></g><g><path d="M309.60 305.32 C309.60 305.32 334.16 266.56 343.26 266.56 C354.36 266.56 363.79 319.32 376.92 319.32 C383.99 319.32 400.48 317.97 410.58 317.97 C420.67 317.97 434.14 318.65 444.24 318.65 C454.34 318.65 467.80 318.65 477.90 318.65 C488.00 318.65 501.46 318.65 511.56 318.65 C521.66 318.65 535.12 318.65 545.22 318.65 C555.32 318.65 568.78 318.65 578.88 318.65 C588.98 318.65 602.44 318.65 612.54 318.65 C622.64 318.65 636.10 319.32 646.20 319.32 C656.30 319.32 679.86 319.32 679.86 319.32" fill="none" stroke="#1a4ff0" stroke-width="2.8" stroke-linejoin="round" stroke-linecap="round"/><circle cx="309.60" cy="305.32" r="5.0" fill="#1a4ff0" stroke="#fff" stroke-width="1.3"/><circle cx="343.26" cy="266.56" r="5.0" fill="#1a4ff0" stroke="#fff" stroke-width="1.3"/><circle cx="376.92" cy="319.32" r="5.0" fill="#1a4ff0" stroke="#fff" stroke-width="1.3"/><circle cx="410.58" cy="317.97" r="5.0" fill="#1a4ff0" stroke="#fff" stroke-width="1.3"/><circle cx="444.24" cy="318.65" r="5.0" fill="#1a4ff0" stroke="#fff" stroke-width="1.3"/><circle cx="477.90" cy="318.65" r="5.0" fill="#1a4ff0" stroke="#fff" stroke-width="1.3"/><circle cx="511.56" cy="318.65" r="5.0" fill="#1a4ff0" stroke="#fff" stroke-width="1.3"/><circle cx="545.22" cy="318.65" r="5.0" fill="#1a4ff0" stroke="#fff" stroke-width="1.3"/><circle cx="578.88" cy="318.65" r="5.0" fill="#1a4ff0" stroke="#fff" stroke-width="1.3"/><circle cx="612.54" cy="318.65" r="5.0" fill="#1a4ff0" stroke="#fff" stroke-width="1.3"/><circle cx="646.20" cy="319.32" r="5.0" fill="#1a4ff0" stroke="#fff" stroke-width="1.3"/><circle cx="679.86" cy="319.32" r="5.0" fill="#1a4ff0" stroke="#fff" stroke-width="1.3"/></g><g><path d="M309.60 317.43 C309.60 317.43 333.40 310.97 343.26 307.28 C353.60 303.42 367.28 292.26 376.92 292.26 C387.48 292.26 399.57 312.16 410.58 314.59 C419.77 316.62 434.14 316.11 444.24 316.62 C454.33 317.12 467.80 317.97 477.90 317.97 C487.99 317.97 501.46 317.97 511.56 317.97 C521.66 317.97 535.12 317.97 545.22 317.97 C555.32 317.97 568.78 317.97 578.88 317.97 C588.98 317.97 602.44 317.97 612.54 317.97 C622.64 317.97 636.15 317.97 646.20 317.97 C656.35 317.97 679.86 313.24 679.86 313.24" fill="none" stroke="#97dbef" stroke-width="2.8" stroke-linejoin="round" stroke-linecap="round"/><circle cx="309.60" cy="317.43" r="5.0" fill="#97dbef" stroke="#fff" stroke-width="1.3"/><circle cx="343.26" cy="307.28" r="5.0" fill="#97dbef" stroke="#fff" stroke-width="1.3"/><circle cx="376.92" cy="292.26" r="5.0" fill="#97dbef" stroke="#fff" stroke-width="1.3"/><circle cx="410.58" cy="314.59" r="5.0" fill="#97dbef" stroke="#fff" stroke-width="1.3"/><circle cx="444.24" cy="316.62" r="5.0" fill="#97dbef" stroke="#fff" stroke-width="1.3"/><circle cx="477.90" cy="317.97" r="5.0" fill="#97dbef" stroke="#fff" stroke-width="1.3"/><circle cx="511.56" cy="317.97" r="5.0" fill="#97dbef" stroke="#fff" stroke-width="1.3"/><circle cx="545.22" cy="317.97" r="5.0" fill="#97dbef" stroke="#fff" stroke-width="1.3"/><circle cx="578.88" cy="317.97" r="5.0" fill="#97dbef" stroke="#fff" stroke-width="1.3"/><circle cx="612.54" cy="317.97" r="5.0" fill="#97dbef" stroke="#fff" stroke-width="1.3"/><circle cx="646.20" cy="317.97" r="5.0" fill="#97dbef" stroke="#fff" stroke-width="1.3"/><circle cx="679.86" cy="313.24" r="5.0" fill="#97dbef" stroke="#fff" stroke-width="1.3"/></g><g><path d="M309.60 319.86 C309.60 319.86 333.16 319.32 343.26 319.32 C353.36 319.32 366.83 319.32 376.92 319.32 C387.02 319.32 400.49 318.48 410.58 317.97 C420.68 317.46 434.15 315.94 444.24 315.94 C454.35 315.94 467.79 318.65 477.90 318.65 C487.98 318.65 501.46 318.65 511.56 318.65 C521.66 318.65 535.12 318.65 545.22 318.65 C555.32 318.65 568.78 318.65 578.88 318.65 C588.98 318.65 602.44 318.65 612.54 318.65 C622.64 318.65 639.32 318.99 646.20 318.99 C659.52 318.99 679.86 263.17 679.86 263.17" fill="none" stroke="#e6a2e0" stroke-width="2.8" stroke-linejoin="round" stroke-linecap="round"/><circle cx="309.60" cy="319.86" r="5.0" fill="#e6a2e0" stroke="#fff" stroke-width="1.3"/><circle cx="343.26" cy="319.32" r="5.0" fill="#e6a2e0" stroke="#fff" stroke-width="1.3"/><circle cx="376.92" cy="319.32" r="5.0" fill="#e6a2e0" stroke="#fff" stroke-width="1.3"/><circle cx="410.58" cy="317.97" r="5.0" fill="#e6a2e0" stroke="#fff" stroke-width="1.3"/><circle cx="444.24" cy="315.94" r="5.0" fill="#e6a2e0" stroke="#fff" stroke-width="1.3"/><circle cx="477.90" cy="318.65" r="5.0" fill="#e6a2e0" stroke="#fff" stroke-width="1.3"/><circle cx="511.56" cy="318.65" r="5.0" fill="#e6a2e0" stroke="#fff" stroke-width="1.3"/><circle cx="545.22" cy="318.65" r="5.0" fill="#e6a2e0" stroke="#fff" stroke-width="1.3"/><circle cx="578.88" cy="318.65" r="5.0" fill="#e6a2e0" stroke="#fff" stroke-width="1.3"/><circle cx="612.54" cy="318.65" r="5.0" fill="#e6a2e0" stroke="#fff" stroke-width="1.3"/><circle cx="646.20" cy="318.99" r="5.0" fill="#e6a2e0" stroke="#fff" stroke-width="1.3"/><circle cx="679.86" cy="263.17" r="5.0" fill="#e6a2e0" stroke="#fff" stroke-width="1.3"/></g><g><path d="M309.60 319.66 C309.60 319.66 333.16 319.48 343.26 319.32 C353.36 319.17 366.82 318.65 376.92 318.65 C387.02 318.65 400.48 319.32 410.58 319.32 C420.68 319.32 434.14 318.65 444.24 318.65 C454.34 318.65 467.80 318.65 477.90 318.65 C488.00 318.65 504.15 318.65 511.56 318.65 C524.35 318.65 535.12 271.29 545.22 271.29 C555.32 271.29 566.09 318.65 578.88 318.65 C586.29 318.65 602.66 318.65 612.54 318.65 C622.86 318.65 636.10 308.50 646.20 308.50 C656.30 308.50 679.86 318.65 679.86 318.65" fill="none" stroke="#ffe55c" stroke-width="2.8" stroke-linejoin="round" stroke-linecap="round"/><circle cx="309.60" cy="319.66" r="5.0" fill="#ffe55c" stroke="#fff" stroke-width="1.3"/><circle cx="343.26" cy="319.32" r="5.0" fill="#ffe55c" stroke="#fff" stroke-width="1.3"/><circle cx="376.92" cy="318.65" r="5.0" fill="#ffe55c" stroke="#fff" stroke-width="1.3"/><circle cx="410.58" cy="319.32" r="5.0" fill="#ffe55c" stroke="#fff" stroke-width="1.3"/><circle cx="444.24" cy="318.65" r="5.0" fill="#ffe55c" stroke="#fff" stroke-width="1.3"/><circle cx="477.90" cy="318.65" r="5.0" fill="#ffe55c" stroke="#fff" stroke-width="1.3"/><circle cx="511.56" cy="318.65" r="5.0" fill="#ffe55c" stroke="#fff" stroke-width="1.3"/><circle cx="545.22" cy="271.29" r="5.0" fill="#ffe55c" stroke="#fff" stroke-width="1.3"/><circle cx="578.88" cy="318.65" r="5.0" fill="#ffe55c" stroke="#fff" stroke-width="1.3"/><circle cx="612.54" cy="318.65" r="5.0" fill="#ffe55c" stroke="#fff" stroke-width="1.3"/><circle cx="646.20" cy="308.50" r="5.0" fill="#ffe55c" stroke="#fff" stroke-width="1.3"/><circle cx="679.86" cy="318.65" r="5.0" fill="#ffe55c" stroke="#fff" stroke-width="1.3"/></g><g><path d="M309.60 319.39 C309.60 319.39 332.19 295.98 343.26 295.98 C352.39 295.98 366.89 299.03 376.92 299.03 C387.09 299.03 400.41 292.60 410.58 292.60 C420.61 292.60 434.13 294.88 444.24 295.65 C454.33 296.41 468.17 295.65 477.90 297.68 C488.37 299.86 508.35 301.55 511.56 311.21 C528.54 362.23 535.16 499.95 545.22 499.95 C555.35 499.95 561.74 351.53 578.88 309.85 C581.94 302.41 605.55 308.98 612.54 302.41 C625.75 290.00 635.59 246.60 646.20 246.60 C655.79 246.60 679.86 294.97 679.86 294.97" fill="none" stroke="#ffaa88" stroke-width="2.8" stroke-linejoin="round" stroke-linecap="round"/><circle cx="309.60" cy="319.39" r="5.0" fill="#ffaa88" stroke="#fff" stroke-width="1.3"/><circle cx="343.26" cy="295.98" r="5.0" fill="#ffaa88" stroke="#fff" stroke-width="1.3"/><circle cx="376.92" cy="299.03" r="5.0" fill="#ffaa88" stroke="#fff" stroke-width="1.3"/><circle cx="410.58" cy="292.60" r="5.0" fill="#ffaa88" stroke="#fff" stroke-width="1.3"/><circle cx="444.24" cy="295.65" r="5.0" fill="#ffaa88" stroke="#fff" stroke-width="1.3"/><circle cx="477.90" cy="297.68" r="5.0" fill="#ffaa88" stroke="#fff" stroke-width="1.3"/><circle cx="511.56" cy="311.21" r="5.0" fill="#ffaa88" stroke="#fff" stroke-width="1.3"/><circle cx="545.22" cy="499.95" r="5.0" fill="#ffaa88" stroke="#fff" stroke-width="1.3"/><circle cx="578.88" cy="309.85" r="5.0" fill="#ffaa88" stroke="#fff" stroke-width="1.3"/><circle cx="612.54" cy="302.41" r="5.0" fill="#ffaa88" stroke="#fff" stroke-width="1.3"/><circle cx="646.20" cy="246.60" r="5.0" fill="#ffaa88" stroke="#fff" stroke-width="1.3"/><circle cx="679.86" cy="294.97" r="5.0" fill="#ffaa88" stroke="#fff" stroke-width="1.3"/></g><g><path d="M309.60 319.73 C309.60 319.73 333.16 317.43 343.26 317.43 C353.35 317.43 366.95 319.32 376.92 319.32 C387.15 319.32 400.43 311.41 410.58 311.41 C420.63 311.41 434.06 316.74 444.24 317.70 C454.25 318.65 467.80 318.40 477.90 318.65 C488.00 318.89 501.47 319.32 511.56 319.32 C521.66 319.32 535.12 317.97 545.22 317.97 C555.32 317.97 568.78 318.78 578.88 318.99 C588.98 319.19 605.52 319.32 612.54 319.32 C625.71 319.32 636.10 265.88 646.20 265.88 C656.30 265.88 679.86 319.32 679.86 319.32" fill="none" stroke="#e9607b" stroke-width="2.8" stroke-linejoin="round" stroke-linecap="round"/><circle cx="309.60" cy="319.73" r="5.0" fill="#e9607b" stroke="#fff" stroke-width="1.3"/><circle cx="343.26" cy="317.43" r="5.0" fill="#e9607b" stroke="#fff" stroke-width="1.3"/><circle cx="376.92" cy="319.32" r="5.0" fill="#e9607b" stroke="#fff" stroke-width="1.3"/><circle cx="410.58" cy="311.41" r="5.0" fill="#e9607b" stroke="#fff" stroke-width="1.3"/><circle cx="444.24" cy="317.70" r="5.0" fill="#e9607b" stroke="#fff" stroke-width="1.3"/><circle cx="477.90" cy="318.65" r="5.0" fill="#e9607b" stroke="#fff" stroke-width="1.3"/><circle cx="511.56" cy="319.32" r="5.0" fill="#e9607b" stroke="#fff" stroke-width="1.3"/><circle cx="545.22" cy="317.97" r="5.0" fill="#e9607b" stroke="#fff" stroke-width="1.3"/><circle cx="578.88" cy="318.99" r="5.0" fill="#e9607b" stroke="#fff" stroke-width="1.3"/><circle cx="612.54" cy="319.32" r="5.0" fill="#e9607b" stroke="#fff" stroke-width="1.3"/><circle cx="646.20" cy="265.88" r="5.0" fill="#e9607b" stroke="#fff" stroke-width="1.3"/><circle cx="679.86" cy="319.32" r="5.0" fill="#e9607b" stroke="#fff" stroke-width="1.3"/></g><text x="713.8" y="209.4" font-size="12" font-weight="400" fill="#222" stroke="#222" stroke-width="0.4" textLength="57.5" lengthAdjust="spacing">ЛЕГЕНДА</text><circle cx="718.9" cy="232.80" r="5" fill="#12b0dc"/><text x="733.3" y="236.70" font-size="11.9" fill="#383838" stroke="#383838" stroke-width="0.05" textLength="48.4" lengthAdjust="spacing">Группа 1</text><g transform="translate(868.6 232.80)" fill="none" stroke="#c4c4c4" stroke-width="1"><path d="M-5.3 0 Q0 -6.4 5.3 0 Q0 6.4 -5.3 0 Z"/><circle r="1.7" fill="#d0d0d0"/></g><circle cx="718.9" cy="256.44" r="5" fill="#c42dbb"/><text x="733.3" y="260.34" font-size="11.9" fill="#383838" stroke="#383838" stroke-width="0.05" textLength="48.4" lengthAdjust="spacing">Группа 2</text><g transform="translate(868.6 256.44)" fill="none" stroke="#c4c4c4" stroke-width="1"><path d="M-5.3 0 Q0 -6.4 5.3 0 Q0 6.4 -5.3 0 Z"/><circle r="1.7" fill="#d0d0d0"/></g><circle cx="718.9" cy="280.08" r="5" fill="#ffd400"/><text x="733.3" y="283.98" font-size="11.9" fill="#383838" stroke="#383838" stroke-width="0.05" textLength="48.4" lengthAdjust="spacing">Группа 3</text><g transform="translate(868.6 280.08)" fill="none" stroke="#c4c4c4" stroke-width="1"><path d="M-5.3 0 Q0 -6.4 5.3 0 Q0 6.4 -5.3 0 Z"/><circle r="1.7" fill="#d0d0d0"/></g><circle cx="718.9" cy="303.72" r="5" fill="#ff6420"/><text x="733.3" y="307.62" font-size="11.9" fill="#383838" stroke="#383838" stroke-width="0.05" textLength="48.4" lengthAdjust="spacing">Группа 4</text><g transform="translate(868.6 303.72)" fill="none" stroke="#c4c4c4" stroke-width="1"><path d="M-5.3 0 Q0 -6.4 5.3 0 Q0 6.4 -5.3 0 Z"/><circle r="1.7" fill="#d0d0d0"/></g><circle cx="718.9" cy="327.36" r="5" fill="#d2176a"/><text x="733.3" y="331.26" font-size="11.9" fill="#383838" stroke="#383838" stroke-width="0.05" textLength="48.4" lengthAdjust="spacing">Группа 5</text><g transform="translate(868.6 327.36)" fill="none" stroke="#c4c4c4" stroke-width="1"><path d="M-5.3 0 Q0 -6.4 5.3 0 Q0 6.4 -5.3 0 Z"/><circle r="1.7" fill="#d0d0d0"/></g><circle cx="718.9" cy="351.00" r="5" fill="#6ccf4a"/><text x="733.3" y="354.90" font-size="11.9" fill="#383838" stroke="#383838" stroke-width="0.05" textLength="48.4" lengthAdjust="spacing">Группа 6</text><g transform="translate(868.6 351.00)" fill="none" stroke="#c4c4c4" stroke-width="1"><path d="M-5.3 0 Q0 -6.4 5.3 0 Q0 6.4 -5.3 0 Z"/><circle r="1.7" fill="#d0d0d0"/></g><circle cx="718.9" cy="374.64" r="5" fill="#1a4ff0"/><text x="733.3" y="378.54" font-size="11.9" fill="#383838" stroke="#383838" stroke-width="0.05" textLength="48.4" lengthAdjust="spacing">Группа 7</text><g transform="translate(868.6 374.64)" fill="none" stroke="#c4c4c4" stroke-width="1"><path d="M-5.3 0 Q0 -6.4 5.3 0 Q0 6.4 -5.3 0 Z"/><circle r="1.7" fill="#d0d0d0"/></g><circle cx="718.9" cy="398.28" r="5" fill="#97dbef"/><text x="733.3" y="402.18" font-size="11.9" fill="#383838" stroke="#383838" stroke-width="0.05" textLength="48.4" lengthAdjust="spacing">Группа 8</text><g transform="translate(868.6 398.28)" fill="none" stroke="#c4c4c4" stroke-width="1"><path d="M-5.3 0 Q0 -6.4 5.3 0 Q0 6.4 -5.3 0 Z"/><circle r="1.7" fill="#d0d0d0"/></g><circle cx="718.9" cy="421.92" r="5" fill="#e6a2e0"/><text x="733.3" y="425.82" font-size="11.9" fill="#383838" stroke="#383838" stroke-width="0.05" textLength="48.4" lengthAdjust="spacing">Группа 9</text><g transform="translate(868.6 421.92)" fill="none" stroke="#c4c4c4" stroke-width="1"><path d="M-5.3 0 Q0 -6.4 5.3 0 Q0 6.4 -5.3 0 Z"/><circle r="1.7" fill="#d0d0d0"/></g><circle cx="718.9" cy="445.56" r="5" fill="#ffe55c"/><text x="733.3" y="449.46" font-size="11.9" fill="#383838" stroke="#383838" stroke-width="0.05" textLength="56.5" lengthAdjust="spacing">Группа 10</text><g transform="translate(868.6 445.56)" fill="none" stroke="#c4c4c4" stroke-width="1"><path d="M-5.3 0 Q0 -6.4 5.3 0 Q0 6.4 -5.3 0 Z"/><circle r="1.7" fill="#d0d0d0"/></g><circle cx="718.9" cy="469.20" r="5" fill="#ffaa88"/><text x="733.3" y="473.10" font-size="11.9" fill="#383838" stroke="#383838" stroke-width="0.05" textLength="56.5" lengthAdjust="spacing">Группа 11</text><g transform="translate(868.6 469.20)" fill="none" stroke="#c4c4c4" stroke-width="1"><path d="M-5.3 0 Q0 -6.4 5.3 0 Q0 6.4 -5.3 0 Z"/><circle r="1.7" fill="#d0d0d0"/></g><circle cx="718.9" cy="492.84" r="5" fill="#e9607b"/><text x="733.3" y="496.74" font-size="11.9" fill="#383838" stroke="#383838" stroke-width="0.05" textLength="56.5" lengthAdjust="spacing">Группа 12</text><g transform="translate(868.6 492.84)" fill="none" stroke="#c4c4c4" stroke-width="1"><path d="M-5.3 0 Q0 -6.4 5.3 0 Q0 6.4 -5.3 0 Z"/><circle r="1.7" fill="#d0d0d0"/></g><g transform="translate(246.6 122.9)" fill="none" stroke="#4a4a55" stroke-width="1.15"><path d="M-7.4 -1 Q-6.2 -6.2 -1 -7.6 Q4.2 -7.3 6.8 -3.6 Q8.1 1 5.7 5 Q2 8.1 -2 7.6 Q-6.8 5.7 -7.5 1.5 Z"/><ellipse rx="7.2" ry="3.2" transform="rotate(40)"/><ellipse rx="7.2" ry="3.2" transform="rotate(-50)"/><path d="M-2 -7 Q1 0 -1 7"/></g><g fill="none" stroke="#6a6a75" stroke-width="1.05" stroke-linejoin="round"><path d="M711.3 118.7 L715.7 116.4 L718.7 118.4 L723.5 115.8 V123.3 L718.7 126.3 L715.7 124.4 L711.3 126.7 Z"/><path d="M713.2 122.4 L715.7 120.6 L718.7 122.5 L721.5 120.8"/></g><text x="733" y="127" font-size="11.5" fill="#999" textLength="68" lengthAdjust="spacing">Тип графика:</text><text x="806" y="127" font-size="11.5" fill="#555" stroke="#555" stroke-width="0.3" textLength="55" lengthAdjust="spacing">Коридоры</text><path d="M874.6 119.8 L879.2 124.5 L883.8 119.8" fill="none" stroke="#6a6a75" stroke-width="1.05"/><text x="237.8" y="166" font-size="23" fill="#222" textLength="218" lengthAdjust="spacing">Заголовок графика</text><g fill="none" stroke="#3b3b48" stroke-width="1.15"><path d="M520.7 207.5 V211.2 H534.8 V207.5"/><path d="M527.7 206.5 V197.5 M523.5 201.3 L527.7 197.2 L531.9 201.3"/></g><g fill="none" stroke="#dcdce2" stroke-width="1.2"><path d="M556 200 L552.6 203.4 L556 206.8 M552.8 203.4 H561.5 Q565.3 203.4 565.3 206.4 Q565.3 209.2 561.5 209.2 H560"/></g><g fill="none" stroke="#dcdce2" stroke-width="1.2"><circle cx="590" cy="204.4" r="6"/><rect x="588.2" y="202.6" width="3.6" height="3.6"/><path d="M594.3 208.7 L597.8 212.2"/></g><g fill="#dcdce2"><rect x="614" y="196.7" width="3.3" height="15"/></g><g fill="none" stroke="#dcdce2" stroke-width="1.3"><path d="M619 197.5 H629 V199.9 H619"/><path d="M621 209.5 L627.3 203.8 M624.6 203.6 L627.6 203.5 L627.6 206.3 M620.7 206.8 L620.8 209.8 L623.7 209.8"/></g><path d="M653.00 196.70 L653.51 196.86 L653.96 197.29 L654.34 197.88 L654.64 198.49 L654.91 198.97 L655.22 199.24 L655.63 199.27 L656.16 199.12 L656.81 198.90 L657.49 198.75 L658.12 198.77 L658.59 199.01 L658.83 199.48 L658.85 200.11 L658.70 200.79 L658.48 201.44 L658.33 201.97 L658.36 202.38 L658.63 202.69 L659.11 202.96 L659.72 203.26 L660.31 203.64 L660.74 204.09 L660.90 204.60 L660.74 205.11 L660.31 205.56 L659.72 205.94 L659.11 206.24 L658.63 206.51 L658.36 206.82 L658.33 207.23 L658.48 207.76 L658.70 208.41 L658.85 209.09 L658.83 209.72 L658.59 210.19 L658.12 210.43 L657.49 210.45 L656.81 210.30 L656.16 210.08 L655.63 209.93 L655.22 209.96 L654.91 210.23 L654.64 210.71 L654.34 211.32 L653.96 211.91 L653.51 212.34 L653.00 212.50 L652.49 212.34 L652.04 211.91 L651.66 211.32 L651.36 210.71 L651.09 210.23 L650.78 209.96 L650.37 209.93 L649.84 210.08 L649.19 210.30 L648.51 210.45 L647.88 210.43 L647.41 210.19 L647.17 209.72 L647.15 209.09 L647.30 208.41 L647.52 207.76 L647.67 207.23 L647.64 206.82 L647.37 206.51 L646.89 206.24 L646.28 205.94 L645.69 205.56 L645.26 205.11 L645.10 204.60 L645.26 204.09 L645.69 203.64 L646.28 203.26 L646.89 202.96 L647.37 202.69 L647.64 202.38 L647.67 201.97 L647.52 201.44 L647.30 200.79 L647.15 200.11 L647.17 199.48 L647.41 199.01 L647.88 198.77 L648.51 198.75 L649.19 198.90 L649.84 199.12 L650.37 199.27 L650.78 199.24 L651.09 198.97 L651.36 198.49 L651.66 197.88 L652.04 197.29 L652.49 196.86 Z" fill="none" stroke="#3b3b48" stroke-width="1.0" stroke-linejoin="round"/><circle cx="653" cy="204.6" r="2.4" fill="none" stroke="#3b3b48" stroke-width="1.1"/><g fill="#3b3b48"><circle cx="679" cy="200" r="1.2"/><circle cx="679" cy="205" r="1.2"/><circle cx="679" cy="209.7" r="1.2"/><rect x="682" y="199.4" width="10.2" height="1.2"/><rect x="682" y="204.4" width="10.2" height="1.2"/><rect x="682" y="209.1" width="10.2" height="1.2"/></g></svg>
</body></html>
